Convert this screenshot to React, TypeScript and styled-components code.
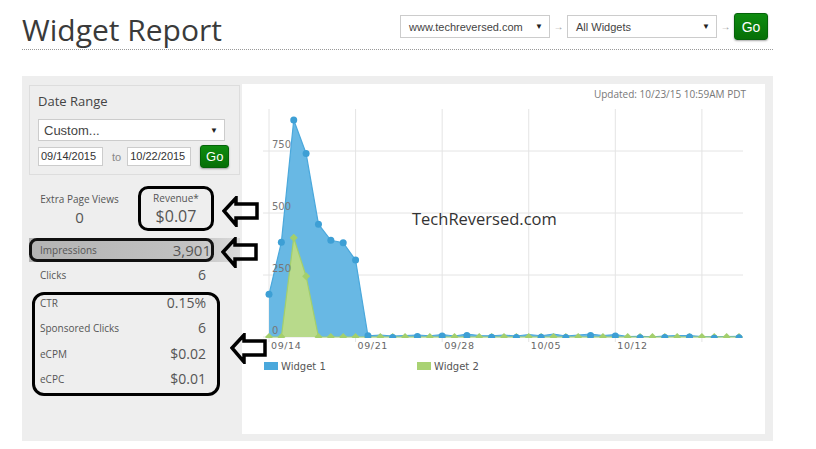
import React from 'react';
import styled, { createGlobalStyle } from 'styled-components';

const GlobalStyle = createGlobalStyle`
  * { box-sizing: border-box; }
  body {
    margin: 0;
    background: #fff;
    font-family: 'Open Sans', 'DejaVu Sans', sans-serif;
    color: #555;
  }
`;

// chart data, one value per day from 09/14 to 10/22
const DAY = 470 / 38;
const px = (i: number) => 269 + i * DAY;
const py = (v: number) => 337 - v * 0.248;
const blue = [
  172, 382, 875, 740, 455, 390, 380, 310, 5, 8, 4, 6, 8, 5, 10, 4, 12, 6, 5, 8,
  4, 10, 5, 12, 4, 8, 12, 6, 10, 2, 3, 1, 4, 6, 6, 2, 1, 2, 3,
];
const green = blue.map((_, i) => (i === 2 ? 400 : i === 3 ? 245 : 0));
const weeks = ['09/14', '09/21', '09/28', '10/05', '10/12', ''];

const stats = [
  { label: 'CTR', value: '0.15%' },
  { label: 'Sponsored Clicks', value: '6' },
  { label: 'eCPM', value: '$0.02' },
  { label: 'eCPC', value: '$0.01' },
];

const App: React.FC = () => (
  <>
    <GlobalStyle />
    <Page>
      <Header>
        <Title>Widget Report</Title>
        <Controls>
          <DropSelect $width={150} $size={11}>
            <span>www.techreversed.com</span>
            <Caret>▼</Caret>
          </DropSelect>
          <Flow>→</Flow>
          <DropSelect $width={150} $size={11}>
            <span>All Widgets</span>
            <Caret>▼</Caret>
          </DropSelect>
          <Flow>→</Flow>
          <GoButton $w={34} $h={27} $size={14}>Go</GoButton>
        </Controls>
      </Header>

      <Panel>
        <LeftCol>
          <DateBox>
            <BoxTitle>Date Range</BoxTitle>
            <DropSelect $width={187} $size={13} $top={10} $height={22}>
              <span>Custom...</span>
              <Caret>▼</Caret>
            </DropSelect>
            <DateRow>
              <DateInput $width={65}>09/14/2015</DateInput>
              <ToLabel>to</ToLabel>
              <DateInput $width={64}>10/22/2015</DateInput>
              <GoButton $w={29} $h={23} $size={13} $left={9}>Go</GoButton>
            </DateRow>
          </DateBox>

          <StatsTop>
            <StatCell>
              <StatLabel>Extra Page Views</StatLabel>
              <StatValue $size={15}>0</StatValue>
            </StatCell>
            <RevenueBox>
              <StatLabel>Revenue*</StatLabel>
              <StatValue $size={16}>$0.07</StatValue>
            </RevenueBox>
          </StatsTop>

          <ImpRow>
            <ImpBox>
              <RowLabel>Impressions</RowLabel>
              <RowValue $size={15}>3,901</RowValue>
            </ImpBox>
          </ImpRow>

          <ClicksRow>
            <RowLabel>Clicks</RowLabel>
            <RowValue $size={14}>6</RowValue>
          </ClicksRow>

          <CtrBox>
            {stats.map((s) => (
              <CtrRow key={s.label}>
                <RowLabel>{s.label}</RowLabel>
                <RowValue $size={14}>{s.value}</RowValue>
              </CtrRow>
            ))}
          </CtrBox>
        </LeftCol>

        <ChartBox>
          <Updated>Updated: 10/23/15 10:59AM PDT</Updated>
          <Chart />
          <Watermark>TechReversed.com</Watermark>
        </ChartBox>

        <Pointer $left={200} $top={120} />
        <Pointer $left={199} $top={161} />
        <Pointer $left={208} $top={257} />
      </Panel>
    </Page>
  </>
);

export default App;

const Chart: React.FC = () => {
  const bluePts = blue.map((v, i) => `${px(i)},${py(v)}`).join(' ');
  const greenPts = green.map((v, i) => `${px(i)},${py(v)}`).join(' ');
  return (
    <svg width="523" height="332" viewBox="242 102 523 332">
      <defs>
        <clipPath id="plot">
          <rect x="262" y="100" width="485" height="238" />
        </clipPath>
      </defs>
      {[0, 250, 500, 750].map((v) => (
        <line key={v} x1="263" x2="743" y1={py(v)} y2={py(v)} stroke="#e4e4e4" />
      ))}
      {weeks.map((_, w) => (
        <line key={w} x1={px(w * 7)} x2={px(w * 7)} y1="109" y2="342" stroke="#e4e4e4" />
      ))}
      <g clipPath="url(#plot)">
        <polygon points={`269,337 ${bluePts} 739,337`} fill="#68b8e4" />
        <polygon points={`269,337 ${greenPts} 739,337`} fill="#b8da8b" />
        <polyline points={bluePts} fill="none" stroke="#4aa8dc" strokeWidth="1.2" />
        <polyline points={greenPts} fill="none" stroke="#a3cf6c" strokeWidth="1.2" />
        {green.map((v, i) => {
          const x = px(i);
          const y = py(v);
          return (
            <polygon
              key={`g${i}`}
              points={`${x},${y - 4} ${x + 4},${y} ${x},${y + 4} ${x - 4},${y}`}
              fill="#a3cf6c"
            />
          );
        })}
        {blue.map((v, i) =>
          i % 2 === 0 || i < 9 ? (
            <circle key={`b${i}`} cx={px(i)} cy={py(v) + (i > 8 ? 1.5 : 0)} r="3.5" fill="#3d9fd5" />
          ) : null,
        )}
      </g>
      {[0, 250, 500, 750].map((v) => (
        <text key={v} x="272" y={py(v) - 3} fontSize="10" fill="#777" fontFamily="'DejaVu Sans', sans-serif">
          {v}
        </text>
      ))}
      {weeks.map((label, w) => (
        <text
          key={label + w}
          x={px(w * 7) + 2}
          y="349"
          fontSize="9.5"
          fill="#666"
          letterSpacing="0.6"
          fontFamily="'DejaVu Sans', sans-serif"
        >
          {label}
        </text>
      ))}
      <rect x="264" y="362" width="14" height="8" fill="#4aa8dc" />
      <text x="281" y="370" fontSize="10" fill="#555" fontFamily="'DejaVu Sans', sans-serif">
        Widget 1
      </text>
      <rect x="417" y="362" width="14" height="8" fill="#a9d273" />
      <text x="434" y="370" fontSize="10" fill="#555" fontFamily="'DejaVu Sans', sans-serif">
        Widget 2
      </text>
    </svg>
  );
};

const Pointer: React.FC<{ $left: number; $top: number }> = ({ $left, $top }) => (
  <ArrowMark $left={$left} $top={$top} width="38" height="31" viewBox="0 0 38 31">
    <polygon
      points="2,15 14,2 14,8 35,8 35,22 14,22 14,29"
      fill="none"
      stroke="#000"
      strokeWidth="3.5"
      strokeLinejoin="miter"
    />
  </ArrowMark>
);

const Page = styled.div`
  width: 773px;
  padding-left: 22px;
`;

const Header = styled.header`
  display: flex;
  justify-content: space-between;
  align-items: flex-start;
  height: 50px;
  padding-right: 5px;
  border-bottom: 1px dotted #999;
`;

const Title = styled.h1`
  margin: 0;
  padding-top: 11px;
  font-size: 30px;
  line-height: 38px;
  font-weight: 400;
  color: #3a3a3a;
`;

const Controls = styled.div`
  display: flex;
  align-items: center;
  margin-top: 13px;
`;

const DropSelect = styled.div<{ $width: number; $size: number; $top?: number; $height?: number }>`
  display: flex;
  align-items: center;
  justify-content: space-between;
  width: ${(p) => p.$width}px;
  height: ${(p) => p.$height ?? 23}px;
  margin-top: ${(p) => p.$top ?? 0}px;
  padding: 0 6px 0 ${(p) => (p.$size > 12 ? 5 : 8)}px;
  background: #fff;
  border: 1px solid #ccc;
  font-family: 'Liberation Sans', Arial, sans-serif;
  font-size: ${(p) => p.$size}px;
  color: #444;
`;

const Caret = styled.span`
  font-size: 8px;
  color: #222;
`;

const Flow = styled.span`
  width: 17px;
  text-align: center;
  font-family: 'Liberation Sans', Arial, sans-serif;
  font-size: 10px;
  color: #999;
`;

const GoButton = styled.button<{ $w: number; $h: number; $size: number; $left?: number }>`
  width: ${(p) => p.$w}px;
  height: ${(p) => p.$h}px;
  margin-left: ${(p) => p.$left ?? 0}px;
  padding: 0;
  border: 1px solid #05630a;
  border-radius: 3px;
  background: linear-gradient(#0f8c10, #066f07);
  box-shadow: 0 1px 2px rgba(0, 0, 0, 0.35);
  font-family: 'Liberation Sans', Arial, sans-serif;
  font-size: ${(p) => p.$size}px;
  color: #fff;
`;

const Panel = styled.section`
  position: relative;
  display: flex;
  height: 365px;
  margin-top: 26px;
  padding: 8px 8px 7px 0;
  background: #eee;
`;

const LeftCol = styled.div`
  flex-shrink: 0;
  width: 220px;
  padding: 1px 0 0 7px;
`;

const DateBox = styled.div`
  width: 211px;
  height: 90px;
  padding: 7px 8px 0;
  border: 1px solid #ddd;
`;

const BoxTitle = styled.div`
  font-size: 13px;
  line-height: 16px;
  color: #444;
`;

const DateRow = styled.div`
  display: flex;
  align-items: center;
  height: 23px;
  margin-top: 4px;
`;

const DateInput = styled.div<{ $width: number }>`
  width: ${(p) => p.$width}px;
  height: 19px;
  padding-left: 2px;
  background: #fff;
  border: 1px solid #ccc;
  font-family: 'Liberation Sans', Arial, sans-serif;
  font-size: 11px;
  line-height: 17px;
  color: #333;
`;

const ToLabel = styled.span`
  margin: 0 6px 0 9px;
  font-family: 'Liberation Sans', Arial, sans-serif;
  font-size: 11px;
  color: #888;
`;

const StatsTop = styled.div`
  display: flex;
  height: 45px;
  margin-top: 11px;
`;

const StatCell = styled.div`
  display: flex;
  flex-direction: column;
  align-items: center;
  width: 101px;
  padding-top: 6px;
`;

const RevenueBox = styled.div`
  display: flex;
  flex-direction: column;
  align-items: center;
  width: 76px;
  margin-left: 8px;
  padding-top: 2px;
  border: 3px solid #000;
  border-radius: 10px;
`;

const StatLabel = styled.div`
  font-size: 10px;
  line-height: 14px;
  color: #555;
`;

const StatValue = styled.div<{ $size: number }>`
  font-size: ${(p) => p.$size}px;
  line-height: 22px;
  color: #555;
`;

const ImpRow = styled.div`
  width: 211px;
  height: 24px;
  margin-top: 7px;
  background: linear-gradient(to right, #b3b3b3, #c2c2c2 75%, #dadada);
`;

const ImpBox = styled.div`
  display: flex;
  justify-content: space-between;
  align-items: center;
  width: 185px;
  height: 24px;
  padding-left: 8px;
  border: 3px solid #111;
  border-radius: 8px;
`;

const RowLabel = styled.span`
  font-size: 10px;
  line-height: 16px;
  color: #555;
`;

const RowValue = styled.span<{ $size: number }>`
  font-size: ${(p) => p.$size}px;
  line-height: 16px;
  color: #555;
`;

const ClicksRow = styled.div`
  display: flex;
  justify-content: space-between;
  align-items: center;
  width: 211px;
  height: 26px;
  padding: 0 34px 0 11px;
`;

const CtrBox = styled.div`
  width: 188px;
  height: 104px;
  margin: 4px 0 0 3px;
  padding: 0 11px 0 5px;
  border: 3px solid #000;
  border-radius: 12px;
`;

const CtrRow = styled.div`
  display: flex;
  justify-content: space-between;
  align-items: flex-start;
  height: 25.3px;
`;

const ChartBox = styled.div`
  position: relative;
  display: flex;
  flex-direction: column;
  flex: 1;
  background: #fff;
`;

const Updated = styled.div`
  height: 18px;
  padding: 3px 19px 0 0;
  text-align: right;
  font-size: 10px;
  line-height: 15px;
  color: #777;
`;

const Watermark = styled.div`
  position: absolute;
  left: 170px;
  top: 124px;
  font-size: 16.5px;
  line-height: 22px;
  color: #333;
`;

const ArrowMark = styled.svg<{ $left: number; $top: number }>`
  position: absolute;
  left: ${(p) => p.$left}px;
  top: ${(p) => p.$top}px;
`;
